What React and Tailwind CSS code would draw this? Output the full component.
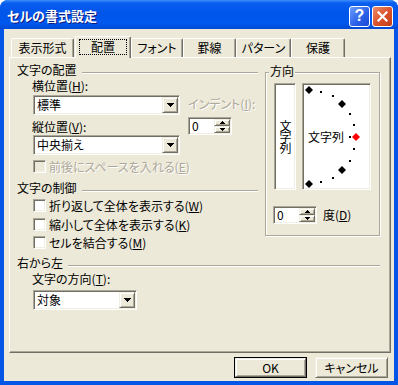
import React from "react";

const sunken =
  "border border-t-[#aca899] border-l-[#aca899] border-r-white border-b-white shadow-[inset_1px_1px_0_#716f64,inset_-1px_-1px_0_#f1efe2]";
const raised =
  "border border-t-[#f1efe2] border-l-[#f1efe2] border-r-[#716f64] border-b-[#716f64] shadow-[inset_1px_1px_0_#fff,inset_-1px_-1px_0_#aca899]";
const disabledText = "text-[#aca899] [text-shadow:1px_1px_0_#fff]";

function DownTri() {
  return (
    <svg width="7" height="4" shapeRendering="crispEdges">
      <path d="M0 0h7v1H0zM1 1h5v1H1zM2 2h3v1H2zM3 3h1v1H3z" fill="#000" />
    </svg>
  );
}

function SmallTri({ up }) {
  return (
    <svg width="5" height="3" shapeRendering="crispEdges">
      {up ? (
        <path d="M2 0h1v1H2zM1 1h3v1H1zM0 2h5v1H0z" fill="#000" />
      ) : (
        <path d="M0 0h5v1H0zM1 1h3v1H1zM2 2h1v1H2z" fill="#000" />
      )}
    </svg>
  );
}

function Combo({ value, className }) {
  return (
    <div className={`${sunken} bg-white flex items-stretch h-[20px] p-[1px] ${className}`}>
      <span className="flex-1 pl-[2px] leading-[16px]">{value}</span>
      <div className={`${raised} bg-[#ece9d8] w-[16px] flex items-center justify-center`}>
        <DownTri />
      </div>
    </div>
  );
}

function Spin({ className }) {
  return (
    <div className={`${sunken} bg-white flex items-stretch h-[18px] w-[44px] p-[1px] ${className || ""}`}>
      <span className="flex-1 pl-[2px] leading-[14px]">0</span>
      <div className="flex flex-col w-[16px]">
        <div className={`${raised} bg-[#ece9d8] flex-1 flex items-center justify-center`}>
          <SmallTri up />
        </div>
        <div className={`${raised} bg-[#ece9d8] flex-1 flex items-center justify-center`}>
          <SmallTri />
        </div>
      </div>
    </div>
  );
}

function Check({ children, disabled, className }) {
  return (
    <div className={`flex items-center h-[13px] ml-[16px] ${className || ""}`}>
      <div className={`w-[13px] h-[13px] ${sunken} ${disabled ? "bg-[#ece9d8]" : "bg-white"}`} />
      <span className={`ml-[3px] leading-[14px] whitespace-nowrap ${disabled ? disabledText : ""}`}>{children}</span>
    </div>
  );
}

function GroupHead({ title, className }) {
  return (
    <div className={`flex items-center h-[14px] ${className || ""}`}>
      <span className="leading-[14px] whitespace-nowrap">{title}</span>
      <div className="flex-1 mt-[6px] ml-[5px] h-[2px] border-t border-t-[#aca899] border-b border-b-white" />
    </div>
  );
}

function Btn({ children, def }) {
  if (def) {
    return (
      <div className="border border-black w-[73px] h-[21px]">
        <div className={`${raised} h-full flex items-center justify-center leading-[14px]`}>{children}</div>
      </div>
    );
  }
  return (
    <div className={`${raised} w-[73px] h-[21px] flex items-center justify-center leading-[14px]`}>{children}</div>
  );
}

function Arc() {
  const cx = 6;
  const cy = 53;
  const r = 47;
  const marks = [];
  for (let a = -90; a <= 90; a += 15) {
    const t = (a * Math.PI) / 180;
    const x = Math.round(cx + r * Math.cos(t));
    const y = Math.round(cy + r * Math.sin(t));
    if (a % 45 === 0) {
      marks.push(
        <polygon
          key={a}
          points={`${x},${y - 4} ${x + 4},${y} ${x},${y + 4} ${x - 4},${y}`}
          fill={a === 0 ? "#ff0000" : "#000"}
        />
      );
    } else {
      marks.push(<rect key={a} x={x - 1} y={y - 1} width="2" height="2" fill="#000" />);
    }
  }
  return (
    <svg className="absolute left-0 top-0" width="67" height="105">
      {marks}
      <rect x="46" y="52" width="2" height="2" fill="#000" />
    </svg>
  );
}

function TitleBar() {
  return (
    <div className="h-[29px] shrink-0 flex items-center pt-[3px] pl-[7px] pr-[5px] bg-[linear-gradient(to_bottom,#3d8ef9_0%,#0a5ff0_10%,#0055ea_45%,#0058ee_80%,#0049d4_100%)]">
      <span className="flex-1 text-white font-bold text-[13px] leading-[16px] [text-shadow:1px_1px_0_#0a1a80]">
        セルの書式設定
      </span>
      <div className="w-[21px] h-[21px] rounded-[3px] border border-white bg-[linear-gradient(135deg,#6b9cfb,#2a5fe8_60%,#1c49d2)] flex items-center justify-center">
        <span className="text-white font-bold text-[16px] leading-[16px] font-['Liberation_Sans',sans-serif]">?</span>
      </div>
      <div className="ml-[2px] w-[21px] h-[21px] rounded-[3px] border border-white bg-[linear-gradient(135deg,#eb8c6c,#d9502a_55%,#c23f18)] flex items-center justify-center">
        <svg width="11" height="11">
          <path d="M1.5 1.5L9.5 9.5M9.5 1.5L1.5 9.5" stroke="#fff" strokeWidth="2.2" strokeLinecap="square" />
        </svg>
      </div>
    </div>
  );
}

const tabs = [
  { label: "表示形式", w: "w-[63px]" },
  { label: "配置", w: "w-[56px]", sel: true },
  { label: "フォント", w: "w-[52px]" },
  { label: "罫線", w: "w-[53px]" },
  { label: "パターン", w: "w-[55px]" },
  { label: "保護", w: "w-[54px]" },
];

export default function App() {
  return (
    <div className="w-[398px] h-[385px] text-[12px] text-black font-['Noto_Sans_CJK_JP','Noto_Sans_CJK_SC',sans-serif] [font-feature-settings:'palt']">
      <div className="w-full h-full flex flex-col rounded-t-[8px] overflow-hidden bg-[#0555e6]">
        <TitleBar />
        <div className="flex-1 mx-[4px] mb-[4px] bg-[#ece9d8] flex flex-col">
          {/* tabs */}
          <div className="ml-[7px] mt-[7px] h-[21px] flex items-end">
            {tabs.map((t) =>
              t.sel ? (
                <div
                  key={t.label}
                  className={`${t.w} ml-[1px] h-[22px] -mb-[1px] relative z-10 bg-[#ece9d8] rounded-t-[2px] border-t border-l border-r border-t-white border-l-white border-r-[#716f64] shadow-[inset_-1px_0_0_#aca899]`}
                >
                  <div className="mx-[3px] mt-[2px] h-[16px] border border-dotted border-black flex items-center justify-center leading-[14px]">
                    {t.label}
                  </div>
                </div>
              ) : (
                <div
                  key={t.label}
                  className={`${t.w} h-[19px] rounded-t-[2px] border-t border-l border-r border-t-white border-l-white border-r-[#716f64] shadow-[inset_-1px_0_0_#aca899] flex items-center justify-center leading-[14px]`}
                >
                  {t.label}
                </div>
              )
            )}
          </div>

          {/* panel */}
          <div className="ml-[5px] w-[382px] h-[296px] border border-t-white border-l-white border-r-[#716f64] border-b-[#716f64] shadow-[inset_-1px_-1px_0_#aca899] pl-[7px] pt-[5px]">
            <div className="flex items-start">
              {/* left column */}
              <div className="w-[241px]">
                <GroupHead title="文字の配置" />
                <div className="flex ml-[15px]">
                  <div className="w-[148px]">
                    <div className="mt-[2px] h-[14px] leading-[14px]">
                      横位置(<span className="underline">H</span>):
                    </div>
                    <Combo value="標準" className="mt-[2px] ml-[1px] w-[147px]" />
                    <div className="mt-[5px] h-[14px] leading-[14px]">
                      縦位置(<span className="underline">V</span>):
                    </div>
                    <Combo value="中央揃え" className="mt-[1px] ml-[1px] w-[147px]" />
                  </div>
                  <div className="ml-[8px] pt-[20px]">
                    <div className={`h-[14px] leading-[14px] whitespace-nowrap ${disabledText}`}>
                      インデント(<span className="underline">I</span>):
                    </div>
                    <Spin className="mt-[6px]" />
                  </div>
                </div>
                <Check disabled className="mt-[5px]">
                  前後にスペースを入れる(<span className="underline">E</span>)
                </Check>
                <GroupHead title="文字の制御" className="mt-[8px]" />
                <Check className="mt-[4px]">
                  折り返して全体を表示する(<span className="underline">W</span>)
                </Check>
                <Check className="mt-[6px]">
                  縮小して全体を表示する(<span className="underline">K</span>)
                </Check>
                <Check className="mt-[5px]">
                  セルを結合する(<span className="underline">M</span>)
                </Check>
              </div>

              {/* right column: 方向 */}
              <div className="ml-[7px] w-[115px] mt-[9px] relative border border-[#aca899] shadow-[inset_1px_1px_0_#fff,1px_1px_0_#fff] pl-[8px] pt-[10px] pb-[11px]">
                <div className="absolute left-[3px] -top-[9px] px-[1px] bg-[#ece9d8] h-[14px] leading-[14px]">方向</div>
                <div className="flex gap-[6px]">
                  <div className={`${sunken} bg-white w-[22px] h-[107px] flex items-center justify-center`}>
                    <span className="[writing-mode:vertical-rl] leading-[14px] tracking-[-1px]">文字列</span>
                  </div>
                  <div className={`${sunken} bg-white w-[69px] h-[107px] relative flex items-center pl-[5px]`}>
                    <Arc />
                    <span className="relative leading-[14px]">文字列</span>
                  </div>
                </div>
                <div className="mt-[16px] -ml-[1px] flex items-center">
                  <Spin />
                  <span className="ml-[6px] leading-[14px]">
                    度(<span className="underline">D</span>)
                  </span>
                </div>
              </div>
            </div>

            {/* 右から左 */}
            <div className="w-[363px]">
              <GroupHead title="右から左" className="mt-[7px]" />
              <div className="ml-[15px] mt-[2px] h-[14px] leading-[14px]">
                文字の方向(<span className="underline">T</span>):
              </div>
              <Combo value="対象" className="ml-[16px] mt-[4px] w-[104px]" />
            </div>
          </div>

          {/* buttons */}
          <div className="mt-[4px] flex justify-end gap-[8px] pr-[6px]">
            <Btn def>OK</Btn>
            <Btn>キャンセル</Btn>
          </div>
        </div>
      </div>
    </div>
  );
}
